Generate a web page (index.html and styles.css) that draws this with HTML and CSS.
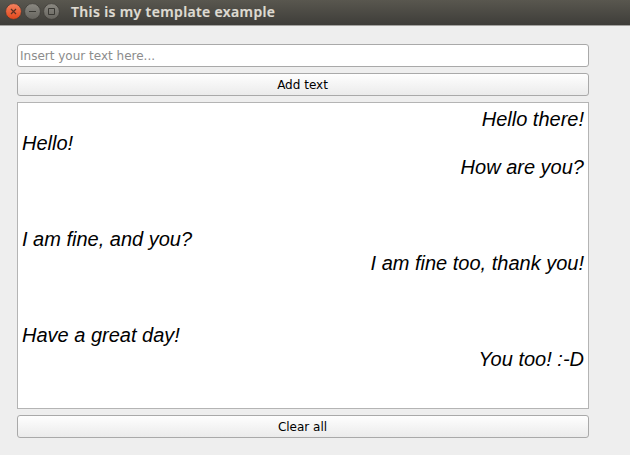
FILE: index.html
```html
<!DOCTYPE html>
<html lang="en">
<head>
<meta charset="utf-8">
<title>This is my template example</title>
<link rel="stylesheet" href="styles.css">
</head>
<body>
<header class="titlebar">
  <div class="controls">
    <svg class="control" viewBox="0 0 17 17" aria-label="Close">
      <defs>
        <linearGradient id="orange" x2="0" y2="1"><stop stop-color="#f58360"/><stop offset="1" stop-color="#e0461a"/></linearGradient>
        <linearGradient id="grey" x2="0" y2="1"><stop stop-color="#8b8982"/><stop offset="1" stop-color="#66645e"/></linearGradient>
      </defs>
      <circle cx="8.5" cy="8.5" r="7.9" fill="url(#orange)" stroke="#3c3a35" stroke-width=".7"/>
      <path d="M6 6l5 5M11 6l-5 5" stroke="#5a3022" stroke-width="1.2"/>
    </svg>
    <svg class="control" viewBox="0 0 17 17" aria-label="Minimize">
      <circle cx="8.5" cy="8.5" r="7.9" fill="url(#grey)" stroke="#3c3a35" stroke-width=".7"/>
      <path d="M5 8.5h7" stroke="#3a3934"/>
    </svg>
    <svg class="control" viewBox="0 0 17 17" aria-label="Maximize">
      <circle cx="8.5" cy="8.5" r="7.9" fill="url(#grey)" stroke="#3c3a35" stroke-width=".7"/>
      <path d="M5.5 5.5h6v6h-6z" fill="none" stroke="#3a3934"/>
    </svg>
  </div>
  <h1 class="title">This is my template example</h1>
</header>
<main class="content">
  <input class="field" type="text" placeholder="Insert your text here...">
  <button class="button" type="button">Add text</button>
  <div class="messages">
    <p class="message sent">Hello there!</p>
    <p class="message">Hello!</p>
    <p class="message sent spaced">How are you?</p>
    <p class="message">I am fine, and you?</p>
    <p class="message sent spaced">I am fine too, thank you!</p>
    <p class="message">Have a great day!</p>
    <p class="message sent">You too! :-D</p>
  </div>
  <button class="button" type="button">Clear all</button>
</main>
</body>
</html>
```
FILE: styles.css
```css
* {
  box-sizing: border-box;
}

body {
  margin: 0;
  height: 455px;
  overflow: hidden;
  background: #eeeeee;
  font-family: "DejaVu Sans", sans-serif;
}

.titlebar {
  display: flex;
  align-items: center;
  height: 26px;
  padding: 0 5px 2px;
  background: linear-gradient(#59574f, #3e3d39);
  border-bottom: 1px solid #a3a29f;
}

.controls {
  display: flex;
  gap: 2px;
}

.control {
  display: block;
  width: 17px;
  height: 17px;
}

.title {
  margin: 0 0 0 11px;
  color: #dfdbd2;
  font: 600 14px/20px "Noto Sans", sans-serif;
  letter-spacing: 0.36px;
  -webkit-text-stroke: 0.2px #dfdbd2;
  white-space: nowrap;
}

.content {
  display: flex;
  flex-direction: column;
  gap: 6px;
  width: 589px;
  padding: 18px 0 0 17px;
}

.field,
.button {
  width: 100%;
  height: 23px;
  margin: 0;
  border: 1px solid #a9a9a9;
  border-radius: 3px;
  font: 12px/15px "DejaVu Sans", sans-serif;
  color: #000;
}

.field {
  padding: 1px 2px 0;
  background: #fff;
}

.field::placeholder {
  color: #8c8c8c;
  opacity: 1;
}

.button {
  padding: 1px 1px 0 0;
  background: linear-gradient(#fefefe, #ebebeb);
}

.messages {
  height: 307px;
  padding: 4px;
  background: #fff;
  border: 1px solid #b4b4b4;
  font: italic 20px/24px "Liberation Sans", sans-serif;
  color: #000;
}

.message {
  margin: 0;
}

.sent {
  text-align: right;
}

.spaced {
  margin-bottom: 48px;
}
```
